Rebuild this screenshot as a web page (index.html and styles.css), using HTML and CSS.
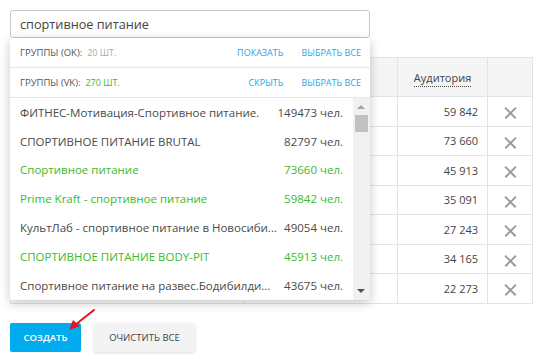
FILE: index.html
```html
<!DOCTYPE html>
<html lang="ru">
<head>
    <meta charset="UTF-8">
    <title>Поиск групп</title>
    <link rel="stylesheet" href="styles.css">
</head>
<body>
    <div class="page">
        <div class="search">
            <input type="text" class="search-input" value="спортивное питание">

            <div class="dropdown">
                <div class="group-row">
                    <span class="group-name">Группы (OK):</span>
                    <span class="group-count">20 шт.</span>
                    <a class="group-link push">Показать</a>
                    <a class="group-link">Выбрать все</a>
                </div>
                <div class="group-row">
                    <span class="group-name">Группы (VK):</span>
                    <span class="group-count green">270 шт.</span>
                    <a class="group-link push">Скрыть</a>
                    <a class="group-link">Выбрать все</a>
                </div>
                <div class="list">
                    <div class="items">
                        <div class="item"><span class="item-name">ФИТНЕС-Мотивация-Спортивное питание.</span><span class="item-count">149473 чел.</span></div>
                        <div class="item"><span class="item-name">СПОРТИВНОЕ ПИТАНИЕ BRUTAL</span><span class="item-count">82797 чел.</span></div>
                        <div class="item green"><span class="item-name">Спортивное питание</span><span class="item-count">73660 чел.</span></div>
                        <div class="item green"><span class="item-name">Prime Kraft - спортивное питание</span><span class="item-count">59842 чел.</span></div>
                        <div class="item"><span class="item-name">КультЛаб - спортивное питание в Новосиби...</span><span class="item-count">49054 чел.</span></div>
                        <div class="item green"><span class="item-name">СПОРТИВНОЕ ПИТАНИЕ BODY-PIT</span><span class="item-count">45913 чел.</span></div>
                        <div class="item"><span class="item-name">Спортивное питание на развес.Бодибилди...</span><span class="item-count">43675 чел.</span></div>
                    </div>
                    <div class="scrollbar">
                        <span class="arrow-up"></span>
                        <span class="thumb"></span>
                        <span class="arrow-down"></span>
                    </div>
                </div>
            </div>
        </div>

        <table class="groups">
            <thead>
                <tr>
                    <th class="c-name"></th>
                    <th class="c-net"></th>
                    <th class="c-aud"><span class="sort">Аудитория</span></th>
                    <th class="c-del"></th>
                </tr>
            </thead>
            <tbody>
                <tr><td></td><td></td><td class="num">59 842</td><td class="del"><span class="x"></span></td></tr>
                <tr><td></td><td></td><td class="num">73 660</td><td class="del"><span class="x"></span></td></tr>
                <tr><td></td><td></td><td class="num">45 913</td><td class="del"><span class="x"></span></td></tr>
                <tr><td></td><td></td><td class="num">35 091</td><td class="del"><span class="x"></span></td></tr>
                <tr><td></td><td></td><td class="num">27 243</td><td class="del"><span class="x"></span></td></tr>
                <tr><td></td><td></td><td class="num">34 165</td><td class="del"><span class="x"></span></td></tr>
                <tr><td></td><td></td><td class="num">22 273</td><td class="del"><span class="x"></span></td></tr>
            </tbody>
        </table>

        <div class="actions">
            <button class="btn btn-primary">Создать</button>
            <button class="btn btn-light">Очистить все</button>
            <svg class="pointer" width="30" height="24" viewBox="0 0 30 24">
                <path d="M27 2 L8 17" stroke="#e8141b" stroke-width="2" stroke-linecap="round" fill="none"/>
                <path d="M2 22 L6 12 L13 18 Z" fill="#e8141b"/>
            </svg>
        </div>
    </div>
</body>
</html>
```

FILE: styles.css
```css
* {
    box-sizing: border-box;
    margin: 0;
    padding: 0;
}

body {
    background-color: #fff;
    font-family: "Open Sans", Arial, sans-serif;
    color: #444;
}

.page {
    position: relative;
    padding: 10px;
}

.search {
    position: relative;
    width: 360px;
    z-index: 5;
}

.search-input {
    display: block;
    width: 360px;
    height: 28px;
    border: 1px solid #c8c8c8;
    border-radius: 3px;
    padding: 0 9px;
    font-family: "Open Sans", Arial, sans-serif;
    font-size: 12.7px;
    color: #444;
    outline: none;
}

.dropdown {
    position: absolute;
    top: 28px;
    left: 0;
    width: 360px;
    background-color: #fff;
    box-shadow: 0 3px 10px rgba(0, 0, 0, 0.22);
}

.group-row {
    display: flex;
    align-items: center;
    height: 30px;
    padding: 0 9px 0 10px;
    border-bottom: 1px solid #e6e6e6;
    font-size: 9px;
    text-transform: uppercase;
}

.group-name {
    color: #555;
    font-size: 9.5px;
}

.group-count {
    margin-left: 5px;
    color: #aaa;
}

.group-count.green {
    color: #3cba2a;
}

.group-link {
    color: #2aa6e3;
    margin-left: 18px;
    cursor: pointer;
}

.group-link.push {
    margin-left: auto;
}

.list {
    display: flex;
    height: 202px;
}

.items {
    flex: 1;
    overflow: hidden;
}

.item {
    display: flex;
    align-items: center;
    justify-content: space-between;
    height: 28.8px;
    padding: 0 10px;
    font-size: 11.5px;
    color: #4a4a4a;
}

.item.green {
    color: #3cba2a;
}

.item-name {
    white-space: nowrap;
    margin-right: 6px;
}

.item-count {
    white-space: nowrap;
}

.scrollbar {
    position: relative;
    width: 17px;
    background-color: #f1f1f1;
}

.arrow-up,
.arrow-down {
    position: absolute;
    left: 4px;
    width: 0;
    height: 0;
    border-left: 4px solid transparent;
    border-right: 4px solid transparent;
}

.arrow-up {
    top: 7px;
    border-bottom: 4px solid #a3a3a3;
}

.arrow-down {
    bottom: 7px;
    border-top: 4px solid #505050;
}

.thumb {
    position: absolute;
    top: 17px;
    left: 2px;
    width: 13px;
    height: 17px;
    background-color: #c1c1c1;
}

.groups {
    width: 523px;
    margin-top: 19px;
    border-collapse: collapse;
    font-size: 11px;
    color: #444;
}

.groups th,
.groups td {
    border: 1px solid #e3e3e3;
    padding: 0 9px;
}

.groups th {
    height: 39px;
    background-color: #f5f5f5;
    font-weight: normal;
    text-align: center;
}

.groups td {
    height: 29.5px;
}

.c-name { width: 235px; }
.c-net { width: 153px; }
.c-aud { width: 90px; }
.c-del { width: 45px; }

.sort {
    border-bottom: 1px dotted #444;
    padding-bottom: 1px;
}

.groups td.num {
    text-align: right;
}

.groups td.del {
    text-align: center;
    padding: 0;
}

.x {
    display: inline-block;
    position: relative;
    width: 13px;
    height: 13px;
    vertical-align: middle;
}

.x::before,
.x::after {
    content: "";
    position: absolute;
    top: 6px;
    left: -1px;
    width: 15px;
    height: 1.6px;
    background-color: #9b9b9b;
    transform: rotate(45deg);
}

.x::after {
    transform: rotate(-45deg);
}

.actions {
    position: relative;
    display: flex;
    gap: 13px;
    margin-top: 19px;
}

.btn {
    height: 29px;
    border: none;
    border-radius: 2px;
    font-family: "Open Sans", Arial, sans-serif;
    font-size: 9.5px;
    text-transform: uppercase;
    cursor: pointer;
}

.btn-primary {
    width: 71px;
    background-color: #00aced;
    color: #fff;
    font-weight: 600;
}

.btn-light {
    width: 101px;
    background-color: #f3f3f3;
    color: #444;
    box-shadow: 0 1px 3px rgba(0, 0, 0, 0.15);
}

.pointer {
    position: absolute;
    left: 57px;
    top: -15px;
}
```
